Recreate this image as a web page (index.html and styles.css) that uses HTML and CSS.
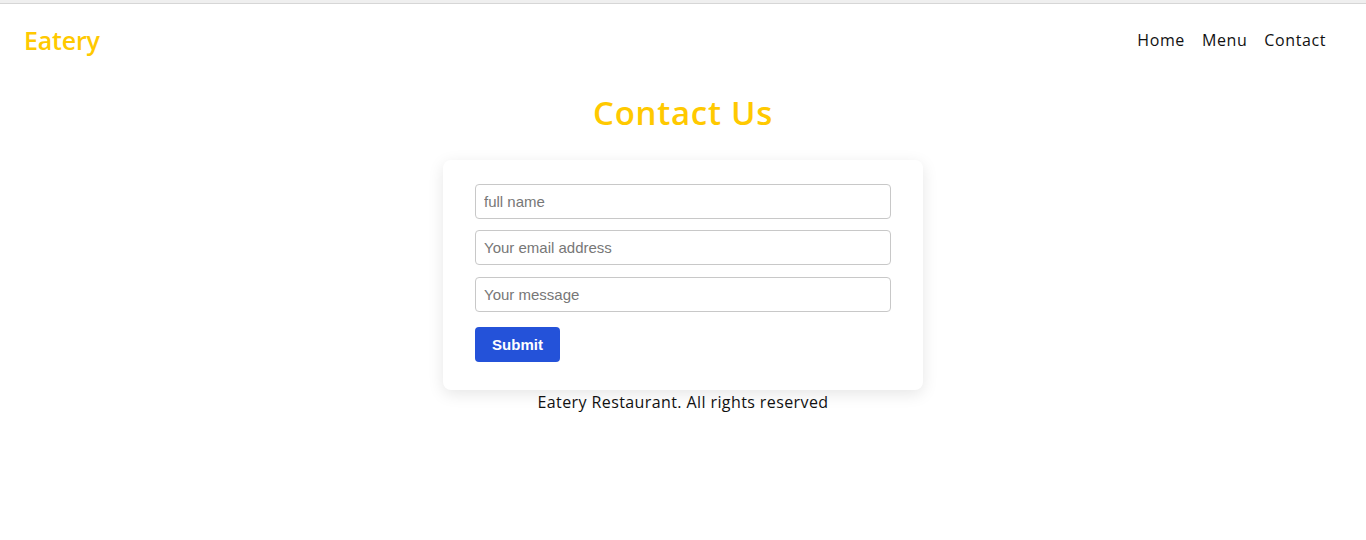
FILE: index.html
```html
<!DOCTYPE html>
<html lang="en">
<head>
<meta charset="utf-8">
<title>Eatery - Contact</title>
<link rel="stylesheet" href="styles.css">
</head>
<body>
<div class="topline"></div>
<header class="header">
  <a class="logo" href="#">Eatery</a>
  <nav class="nav">
    <a href="#">Home</a>
    <a href="#">Menu</a>
    <a href="#">Contact</a>
  </nav>
</header>
<main class="main">
  <h1 class="title">Contact Us</h1>
  <form class="card">
    <input class="field" type="text" placeholder="full name">
    <input class="field" type="email" placeholder="Your email address">
    <input class="field field-last" type="text" placeholder="Your message">
    <button class="submit" type="button">Submit</button>
  </form>
  <footer class="footer">Eatery Restaurant. All rights reserved</footer>
</main>
</body>
</html>
```
FILE: styles.css
```css
* { box-sizing: border-box; }
html, body { margin: 0; padding: 0; background: #fff; }
body { font-family: "Open Sans", "Noto Sans", sans-serif; color: #111; }
.topline { height: 4px; background: #efefef; border-bottom: 1px solid #d6d6d6; }
.header {
  display: flex; align-items: center; justify-content: space-between;
  padding: 0 40px 0 24px; height: 72px;
}
.logo { color: #ffc900; font-size: 25px; font-weight: 600; text-decoration: none; letter-spacing: -0.2px; }
.nav { display: flex; gap: 17px; }
.nav a { color: #111; text-decoration: none; font-size: 16px; letter-spacing: 0.6px; }
.main { display: flex; flex-direction: column; align-items: center; }
.title { margin: 13px 0 0; color: #ffc900; font-size: 33px; font-weight: 600; line-height: 48px; letter-spacing: 0.7px; }
.card {
  margin-top: 23px; width: 480px; padding: 24px 32px 28px; background: #fff;
  border-radius: 8px; box-shadow: 0 4px 16px rgba(0,0,0,0.1);
  display: flex; flex-direction: column; align-items: flex-start; gap: 11px;
}
.field {
  width: 100%; height: 35px; border: 1px solid #c8c8c8; border-radius: 4px;
  padding: 0 8px; font-family: "Liberation Sans", Arial, sans-serif; font-size: 15px; color: #333;
}
.field-last { margin-top: 1px; }
.field::placeholder { color: #777; }
.submit {
  margin-top: 4px; width: 85px; height: 35px; border: none; border-radius: 4px;
  background: #2452d9; color: #fff; font-family: "Liberation Sans", Arial, sans-serif;
  font-size: 15px; font-weight: 700;
}
.footer { margin-top: 0; font-size: 16px; line-height: 24px; color: #111; letter-spacing: 0.4px; }
```
